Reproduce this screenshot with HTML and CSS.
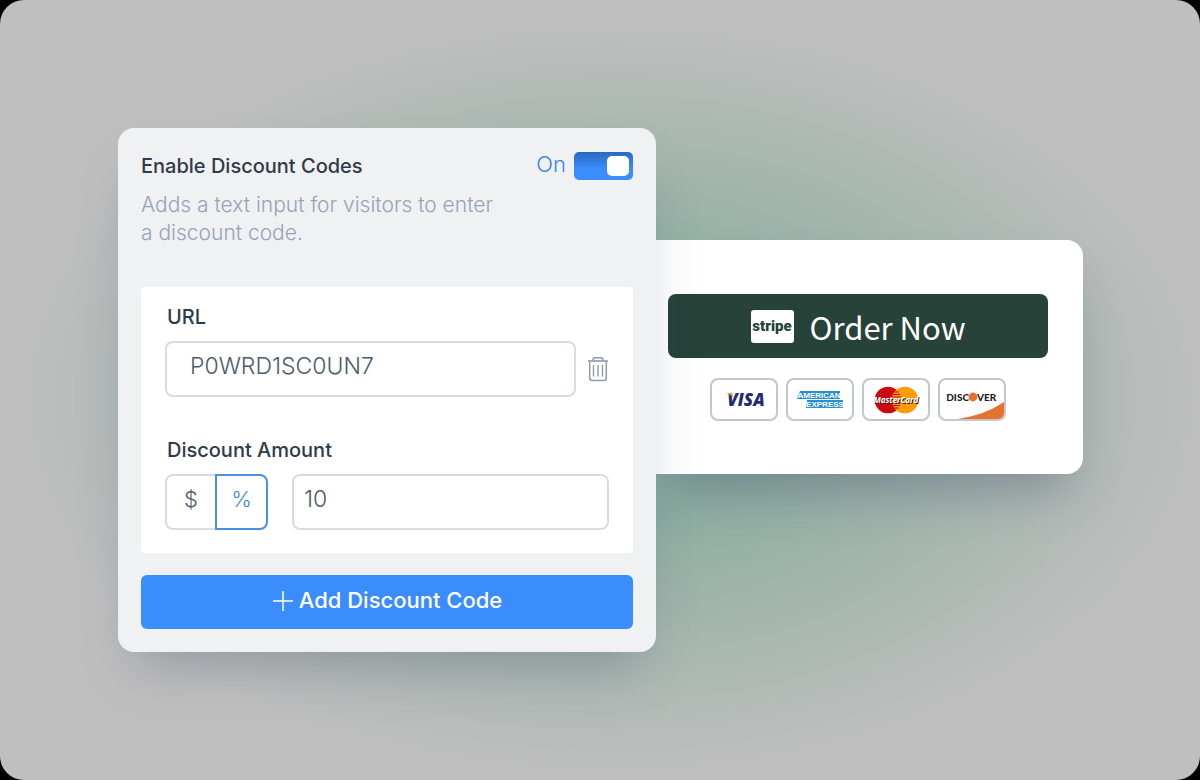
FILE: index.html
```html
<!DOCTYPE html>
<html lang="en">

<head>
    <meta charset="UTF-8">
    <meta name="viewport" content="width=device-width, initial-scale=1.0">
    <title>Discount Codes</title>
    <link rel="stylesheet" href="styles.css">
</head>

<body>
    <main class="stage">
        <form class="panel">
            <div class="panel-header">
                <h2>Enable Discount Codes</h2>
                <label class="toggle">
                    <span>On</span>
                    <input type="checkbox" checked>
                </label>
            </div>
            <p class="description">Adds a text input for visitors to enter a discount code.</p>

            <div class="code-box">
                <label class="field-label" for="code">URL</label>
                <div class="code-row">
                    <input class="text-input code-input" id="code" type="text" value="P0WRD1SC0UN7">
                    <button class="delete" type="button" aria-label="Delete code">
                        <svg width="22" height="26" viewBox="0 0 22 26" fill="none" stroke="#8f9bab">
                            <path d="M1 5h20" stroke-width="1.6" />
                            <path d="M6 5V4q0-2.200 2.200-2.200h5.600Q16 1.800 16 4v1" stroke-width="1.400" />
                            <path d="M2.700 5v17q0 2.500 2.500 2.500h11.600q2.500 0 2.500-2.500V5" stroke-width="1.500" />
                            <path d="M6.500 9v11.500M11 9v11.500M15.500 9v11.500" stroke-width="1.400" />
                        </svg>
                    </button>
                </div>

                <label class="field-label amount-label" for="amount">Discount Amount</label>
                <div class="amount-row">
                    <div class="units">
                        <label class="unit"><input type="radio" name="unit">$</label>
                        <label class="unit"><input type="radio" name="unit" checked>%</label>
                    </div>
                    <input class="text-input amount-input" id="amount" type="text" value="10">
                </div>
            </div>

            <button class="add" type="button">
                <svg width="22" height="22" viewBox="0 0 22 22" stroke="#fff" stroke-width="1.5">
                    <path d="M1 12h20M11 2v20" />
                </svg>
                Add Discount Code
            </button>
        </form>

        <section class="order">
            <button class="order-button" type="button">
                <span class="stripe">stripe</span>
                Order Now
            </button>
            <ul class="cards">
                <li class="card">
                    <svg width="64" height="39" viewBox="0 0 64 39">
                        <text class="visa" x="34" y="26" text-anchor="middle">VISA</text>
                        <path d="M14 13h5q2 1 2.500 5-3-4-7.500-5z" fill="#e8a33d" />
                    </svg>
                </li>
                <li class="card">
                    <svg width="64" height="39" viewBox="0 0 64 39">
                        <path d="M12 11h40v8H9zM19 20h36v8H18z" fill="#2a8fd0" />
                        <text class="amex" x="31" y="18" text-anchor="middle">AMERICAN</text>
                        <text class="amex" x="37" y="27" text-anchor="middle">EXPRESS</text>
                    </svg>
                </li>
                <li class="card">
                    <svg width="64" height="39" viewBox="0 0 64 39">
                        <circle cx="24" cy="20" r="13.300" fill="#cc0a0f" />
                        <circle cx="41" cy="20" r="13.300" fill="#f99d0b" />
                        <path d="M30 12h5M29 14.500h7M28 17h9M28 23h9M29 25.500h7M30 28h5" stroke="#cc0a0f" />
                        <text class="mastercard-shadow" x="33" y="24" text-anchor="middle">MasterCard</text>
                        <text class="mastercard" x="32" y="23" text-anchor="middle">MasterCard</text>
                    </svg>
                </li>
                <li class="card">
                    <svg width="64" height="39" viewBox="0 0 64 39">
                        <path d="M18 39Q45 35 64 22v17z" fill="#e4732f" />
                        <text class="discover" x="29" y="21" text-anchor="end">DISC</text>
                        <circle cx="33" cy="17" r="4.400" fill="#e4732f" />
                        <text class="discover" x="37" y="21">VER</text>
                    </svg>
                </li>
            </ul>
        </section>
    </main>
</body>

</html>
```

FILE: styles.css
```css
* {
    box-sizing: border-box;
}

body {
    margin: 0;
    background-color: #000;
    font-family: Inter, "Liberation Sans", sans-serif;
    color: #303b4a;
}

.stage {
    display: grid;
    grid-template-columns: minmax(0, 538fr) minmax(0, 427fr);
    align-items: center;
    min-height: 100vh;
    padding: 24px 117px 24px 118px;
    border-radius: 24px;
    background: radial-gradient(ellipse 50% 49% at 51% 51%, #82ac9c 0%, #8cafa1 30%, #9fb4ab 55%, #b0bab5 78%, #bbbdbc 92%, #bfbfbf 100%), #bfbfbf;
}

/* discount settings */
.panel {
    position: relative;
    padding: 24px 23px 23px;
    border-radius: 16px;
    background-color: #eff1f3;
    box-shadow: 0 30px 50px -18px rgba(72, 78, 110, 0.35);
}

.panel-header {
    display: flex;
    justify-content: space-between;
    align-items: center;
}

h2 {
    margin: 0;
    font-size: 20px;
    font-weight: 500;
    line-height: 28px;
}

.toggle {
    display: flex;
    align-items: center;
    gap: 8px;
    height: 28px;
    font-size: 22px;
    font-weight: 300;
    color: #3f86e0;
}

.toggle span {
    padding-bottom: 4px;
}

.toggle input {
    appearance: none;
    display: flex;
    justify-content: flex-end;
    width: 59px;
    height: 28px;
    margin: 0;
    padding: 4px;
    border-radius: 5px;
    background: linear-gradient(#2d69bd, #3b8cfd 60%);
}

.toggle input::before {
    content: "";
    width: 22px;
    border-radius: 5px;
    background-color: #fff;
}

.description {
    max-width: 360px;
    margin: 11px 0 40px;
    font-size: 21px;
    font-weight: 300;
    line-height: 28px;
    color: #97a3b8;
}

.code-box {
    padding: 16px 24px 23px;
    border-radius: 4px;
    background-color: #fff;
}

.field-label {
    display: block;
    margin-bottom: 10px;
    padding-left: 2px;
    font-size: 20px;
    font-weight: 500;
    line-height: 28px;
}

.amount-label {
    margin-top: 39px;
}

.code-row,
.amount-row,
.units {
    display: flex;
    align-items: center;
}

.text-input {
    flex: 1;
    min-width: 0;
    height: 56px;
    border: 2px solid #d8dcdf;
    border-radius: 8px;
    background-color: #fff;
    font: 300 23px Inter, "Liberation Sans", sans-serif;
    color: #4e5b6b;
}

.code-input {
    padding: 0 23px 6px;
}

.amount-input {
    padding: 0 10px 6px;
}

.code-row {
    gap: 11px;
}

.amount-row {
    gap: 24px;
}

.delete {
    display: flex;
    padding: 0;
    border: 0;
    background: none;
}

.unit {
    display: flex;
    align-items: center;
    justify-content: center;
    width: 50px;
    height: 56px;
    padding-bottom: 6px;
    border: 2px solid #d8dcdf;
    border-right: 0;
    border-radius: 8px 0 0 8px;
    font-size: 22px;
    font-weight: 300;
    color: #4e5b6b;
}

.unit + .unit {
    width: 53px;
    border: 2px solid #4a90e2;
    border-radius: 0 8px 8px 0;
    color: #3f86e0;
}

.unit input {
    appearance: none;
    width: 0;
    margin: 0;
}

.add {
    display: flex;
    align-items: center;
    justify-content: center;
    gap: 5px;
    width: 100%;
    height: 54px;
    margin-top: 22px;
    padding: 0 0 4px;
    border: 0;
    border-radius: 6px;
    background-color: #3b8cfd;
    font: 500 22px Inter, "Liberation Sans", sans-serif;
    color: #fff;
}

/* checkout preview */
.order {
    margin-bottom: 66px;
    padding: 54px 35px 53px 12px;
    border-radius: 0 16px 16px 0;
    background-color: #fff;
    box-shadow: 0 30px 50px -14px rgba(72, 78, 110, 0.4);
}

.order-button {
    display: flex;
    align-items: center;
    justify-content: center;
    gap: 16px;
    width: 100%;
    height: 64px;
    padding: 0;
    border: 0;
    border-radius: 8px;
    background-color: #264239;
    font: 400 31px "Noto Sans CJK SC", "Noto Sans", sans-serif;
    color: #fff;
}

.stripe {
    width: 43px;
    height: 33px;
    border-radius: 3px;
    background-color: #fff;
    font-family: Roboto, sans-serif;
    font-size: 15px;
    font-weight: 900;
    line-height: 32px;
    color: #264239;
}

.cards {
    display: flex;
    justify-content: center;
    gap: 8px;
    margin: 20px 0 0;
    padding: 0;
    list-style: none;
}

.card {
    width: 68px;
    height: 43px;
    border: 2px solid #c4c7c9;
    border-radius: 8px;
    overflow: hidden;
}

.card svg {
    display: block;
}

.visa {
    font: italic 800 17px "Open Sans", sans-serif;
    fill: #242a72;
}

.amex {
    font: 700 8px "Liberation Sans", sans-serif;
    fill: #fff;
}

.mastercard,
.mastercard-shadow {
    font: italic 700 8px "Open Sans", sans-serif;
    fill: #fff;
}

.mastercard-shadow {
    fill: #4a1010;
}

.discover {
    font: 900 10px Lato, sans-serif;
    fill: #231f20;
}
```
